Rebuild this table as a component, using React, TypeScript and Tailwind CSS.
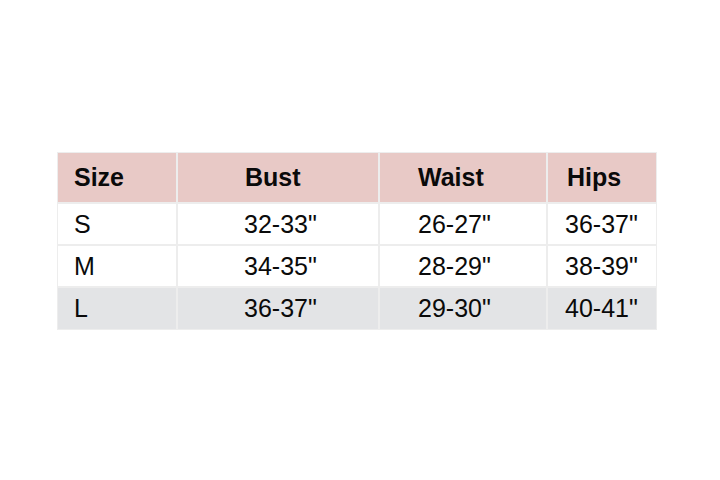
import React from "react";

const rows = [
  { s: "S", b: '32-33"', w: '26-27"', h: '36-37"', bg: "bg-white", hh: "h-[40px]" },
  { s: "M", b: '34-35"', w: '28-29"', h: '38-39"', bg: "bg-white", hh: "h-[40px]" },
  { s: "L", b: '36-37"', w: '29-30"', h: '40-41"', bg: "bg-[#e3e4e6]", hh: "h-[41px]" },
];

export default function App() {
  return (
    <div
      className="w-[720px] h-[480px] bg-white flex flex-col"
      style={{ fontFamily: '"Liberation Sans", Arial, sans-serif' }}
    >
      <div className="pt-[152px] pl-[57px]">
        <div className="grid grid-cols-[118px_200px_166px_108px] gap-[2px] bg-[#ededed] p-[1px] w-fit text-[25px] text-[#0a0a0a]">
          <div className="h-[49px] bg-[#e8c9c6] font-bold flex items-center pl-[16px]">Size</div>
          <div className="h-[49px] bg-[#e8c9c6] font-bold flex items-center pl-[67px]">Bust</div>
          <div className="h-[49px] bg-[#e8c9c6] font-bold flex items-center pl-[38px]">Waist</div>
          <div className="h-[49px] bg-[#e8c9c6] font-bold flex items-center pl-[19px]">Hips</div>
          {rows.map((r) => (
            <React.Fragment key={r.s}>
              <div className={`${r.hh} ${r.bg} flex items-center pl-[16px] pt-[1px]`}>{r.s}</div>
              <div className={`${r.hh} ${r.bg} flex items-center pl-[66px] pt-[1px]`}>{r.b}</div>
              <div className={`${r.hh} ${r.bg} flex items-center pl-[38px] pt-[1px]`}>{r.w}</div>
              <div className={`${r.hh} ${r.bg} flex items-center pl-[17px] pt-[1px]`}>{r.h}</div>
            </React.Fragment>
          ))}
        </div>
      </div>
    </div>
  );
}
